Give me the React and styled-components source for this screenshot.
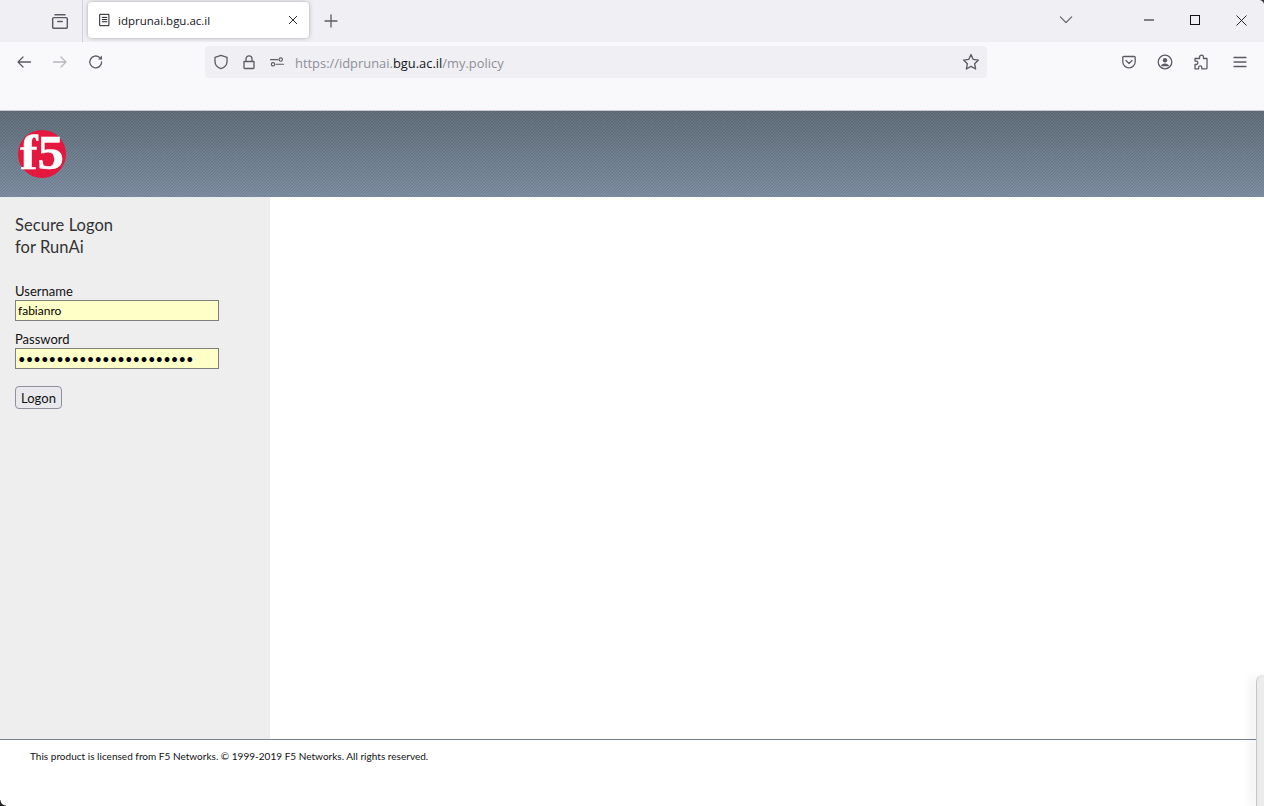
import styled, { createGlobalStyle } from "styled-components";

const GlobalStyle = createGlobalStyle`
  html, body {
    margin: 0;
    padding: 0;
    background: #fff;
  }
`;

const Icon = ({ size = 16, children, color = "#5b5b66", width = 1.3 }) => (
  <svg
    width={size}
    height={size}
    viewBox="0 0 16 16"
    fill="none"
    stroke={color}
    strokeWidth={width}
    strokeLinecap="round"
    strokeLinejoin="round"
  >
    {children}
  </svg>
);

const F5Logo = () => (
  <LogoSvg width="50" height="50" viewBox="0 0 50 50">
    <circle cx="25" cy="25" r="24" fill="#e4173e" />
    <text
      x="3"
      y="40"
      fontFamily="'Liberation Serif', serif"
      fontWeight="700"
      fontSize="48"
      fill="#fff"
      stroke="#fff"
      strokeWidth="0.5"
      textLength="44"
      lengthAdjust="spacingAndGlyphs"
    >
      f5
    </text>
  </LogoSvg>
);

const App = () => {
  return (
    <>
      <GlobalStyle />
      <Page>
        <TabStrip>
          <TabsButton>
            <Icon size={18}>
              <path d="M3.500 2.500h9M2.500 5h11a1 1 0 0 1 1 1v7.500a1 1 0 0 1-1 1h-11a1 1 0 0 1-1-1V6a1 1 0 0 1 1-1zM6 8.500h4" />
            </Icon>
          </TabsButton>
          <Tab>
            <Icon size={14} color="#15141a" width={1.1}>
              <path d="M2.500 1.500h10v13h-10zM5 5h5M5 7.500h5M5 10h5" strokeLinecap="square" />
            </Icon>
            <TabTitle>idprunai.bgu.ac.il</TabTitle>
            <Icon size={12} color="#15141a" width={1.2}>
              <path d="M3 3l10 10M13 3L3 13" />
            </Icon>
          </Tab>
          <NewTab>
            <Icon size={16} width={1.3}>
              <path d="M8 2v12M2 8h12" />
            </Icon>
          </NewTab>
          <Spacer />
          <TabListArrow>
            <Icon size={14}>
              <path d="M1.500 4.500L8 11l6.500-6.500" />
            </Icon>
          </TabListArrow>
          <WindowButton>
            <svg width="10" height="10" viewBox="0 0 10 10">
              <path d="M0 5h10" stroke="#111" strokeWidth="1" />
            </svg>
          </WindowButton>
          <WindowButton>
            <svg width="10" height="10" viewBox="0 0 10 10">
              <rect x="0.5" y="0.5" width="9" height="9" fill="none" stroke="#111" />
            </svg>
          </WindowButton>
          <WindowButton>
            <svg width="11" height="11" viewBox="0 0 11 11">
              <path d="M0.5 0.5l10 10M10.5 0.5l-10 10" stroke="#111" strokeWidth="0.9" />
            </svg>
          </WindowButton>
        </TabStrip>

        <NavBar>
          <NavButtons>
            <NavIcon>
              <Icon size={16}>
                <path d="M14.500 8H2M7 3L2 8l5 5" />
              </Icon>
            </NavIcon>
            <NavIcon>
              <Icon size={16} color="#b8b8bd">
                <path d="M1.500 8H14M9 3l5 5-5 5" />
              </Icon>
            </NavIcon>
            <NavIcon>
              <Icon size={16}>
                <path d="M13.600 8a5.900 5.900 0 1 1-1.900-4.400" />
                <path d="M14 1.500v4h-4z" fill="#5b5b66" stroke="none" />
              </Icon>
            </NavIcon>
          </NavButtons>
          <UrlBar>
            <UrlIcons>
              <Icon size={16}>
                <path d="M8 1.300l6 2v4.200c0 3.600-2.600 6-6 7.200-3.400-1.200-6-3.600-6-7.200V3.300z" />
              </Icon>
              <Icon size={16}>
                <path d="M3 7.500h10v6.200a.8.8 0 0 1-.8.8H3.800a.8.8 0 0 1-.8-.8zM5 7.500V4.800a3 3 0 0 1 6 0v2.700" />
              </Icon>
              <Icon size={16} width={1.1}>
                <circle cx="11.700" cy="5.600" r="1.700" />
                <circle cx="4" cy="10.300" r="1.700" />
                <path d="M1.500 5.600h7.500M7 10.300h7.500" />
              </Icon>
            </UrlIcons>
            <UrlText>
              https://idprunai.<strong>bgu.ac.il</strong>/my.policy
            </UrlText>
            <Icon size={18} width={1.2}>
              <path d="M8 1.400l2 4.300 4.600.6-3.400 3.200.9 4.700L8 11.900l-4.100 2.300.9-4.700-3.400-3.200 4.600-.6z" />
            </Icon>
          </UrlBar>
          <Spacer />
          <Tools>
            <ToolIcon>
              <Icon size={16}>
                <path d="M2.800 2.500h10.400a1 1 0 0 1 1 1v4.200a6.200 6.200 0 0 1-12.400 0V3.500a1 1 0 0 1 1-1zM5 6.500l3 3 3-3" />
              </Icon>
            </ToolIcon>
            <ToolIcon>
              <Icon size={16}>
                <circle cx="8" cy="8" r="6.800" />
                <circle cx="8" cy="6.300" r="2.200" fill="#5b5b66" stroke="none" />
                <path d="M3.800 12.300c.6-2 2.300-2.800 4.200-2.800s3.600.8 4.200 2.800" fill="#5b5b66" stroke="none" />
              </Icon>
            </ToolIcon>
            <ToolIcon>
              <Icon size={16}>
                <path d="M6.500 3.200a2 2 0 0 1 4 0V4.500h3.500v9.500a.8.8 0 0 1-.8.8H8.800v-1.300a1.600 1.600 0 0 0-3.200 0v1.300H2V10.500h1.200a1.700 1.700 0 0 0 0-3.400H2V4.500h4.500z" />
              </Icon>
            </ToolIcon>
            <MenuIcon>
              <Icon size={16}>
                <path d="M2 3.500h12M2 8h12M2 12.500h12" />
              </Icon>
            </MenuIcon>
          </Tools>
        </NavBar>

        <Banner>
          <F5Logo />
        </Banner>

        <Main>
          <Sidebar>
            <Heading>
              Secure Logon
              <br />
              for RunAi
            </Heading>
            <Field>
              <FieldLabel htmlFor="username">Username</FieldLabel>
              <TextInput id="username" type="text" defaultValue="fabianro" />
            </Field>
            <Field>
              <FieldLabel htmlFor="password">Password</FieldLabel>
              <PasswordInput id="password" type="password" defaultValue="abcdefghijklmnopqrstuvw" />
            </Field>
            <LogonButton type="button">Logon</LogonButton>
          </Sidebar>
          <Content />
        </Main>

        <Footer>
          This product is licensed from F5 Networks. © 1999-2019 F5 Networks. All rights reserved.
        </Footer>

        <SidePanel />
        <CornerBottomLeft />
        <CornerTopRight />
      </Page>
    </>
  );
};

const Page = styled.div`
  position: relative;
  display: flex;
  flex-direction: column;
  width: 1264px;
  height: 806px;
  overflow: hidden;
  font-family: "Open Sans", "Noto Sans", sans-serif;
`;

const TabStrip = styled.div`
  display: flex;
  align-items: flex-start;
  height: 42px;
  background: #f0f0f4;
`;

const TabsButton = styled.div`
  display: flex;
  align-items: center;
  justify-content: center;
  width: 83px;
  height: 42px;
  box-sizing: border-box;
  padding-left: 37px;
  border-right: 1px solid #cfcfd8;
`;

const Tab = styled.div`
  display: flex;
  align-items: center;
  box-sizing: border-box;
  width: 221px;
  height: 36px;
  margin: 2px 0 0 5px;
  padding: 0 10px;
  background: #fff;
  border-radius: 4px;
  box-shadow: 0 0 4px rgba(0, 0, 0, 0.3);
`;

const TabTitle = styled.span`
  flex: 1;
  margin-left: 6px;
  font-size: 11.5px;
  color: #15141a;
`;

const NewTab = styled.div`
  display: flex;
  align-items: center;
  justify-content: center;
  width: 44px;
  height: 42px;
`;

const Spacer = styled.div`
  flex: 1;
`;

const TabListArrow = styled.div`
  display: flex;
  align-items: center;
  justify-content: center;
  width: 44px;
  height: 40px;
  margin-right: 38px;
`;

const WindowButton = styled.div`
  display: flex;
  align-items: center;
  justify-content: center;
  width: 46px;
  height: 40px;
`;

const NavBar = styled.div`
  display: flex;
  align-items: flex-start;
  box-sizing: border-box;
  height: 69px;
  padding-top: 4px;
  background: #f9f9fb;
  border-bottom: 1px solid #c8c8cc;
`;

const NavButtons = styled.div`
  display: flex;
  gap: 4px;
  width: 205px;
  padding-left: 8px;
  box-sizing: border-box;
`;

const NavIcon = styled.div`
  display: flex;
  align-items: center;
  justify-content: center;
  width: 32px;
  height: 32px;
`;

const UrlBar = styled.div`
  display: flex;
  align-items: center;
  box-sizing: border-box;
  width: 782px;
  height: 32px;
  padding: 0 7px 0 8px;
  background: #f0f0f4;
  border-radius: 4px;
`;

const UrlIcons = styled.div`
  display: flex;
  gap: 12px;
  margin-right: 10px;
`;

const UrlText = styled.div`
  flex: 1;
  padding-top: 2px;
  font-size: 12.9px;
  color: #8f8f96;

  strong {
    font-weight: 400;
    color: #15141a;
  }
`;

const Tools = styled.div`
  display: flex;
  gap: 4px;
  padding-right: 8px;
`;

const ToolIcon = styled.div`
  display: flex;
  align-items: center;
  justify-content: center;
  width: 32px;
  height: 32px;
`;

const MenuIcon = styled(ToolIcon)`
  margin-left: 3px;
`;

const Banner = styled.div`
  display: flex;
  align-items: center;
  box-sizing: border-box;
  height: 86px;
  padding-left: 17px;
  background:
    repeating-linear-gradient(
      135deg,
      rgba(255, 255, 255, 0.05) 0,
      rgba(255, 255, 255, 0.05) 1.0607px,
      rgba(0, 0, 0, 0.06) 1.0607px,
      rgba(0, 0, 0, 0.06) 2.1213px
    ),
    linear-gradient(#5b6975, #78899d);
`;

const LogoSvg = styled.svg`
  overflow: visible;
`;

const Main = styled.div`
  display: flex;
  height: 542px;
`;

const Sidebar = styled.div`
  box-sizing: border-box;
  width: 270px;
  padding: 17px 15px 0;
  background: #eeeeee;
`;

const Content = styled.div`
  flex: 1;
  background: #fff;
`;

const Heading = styled.div`
  margin-bottom: 25px;
  font-family: "Lato", sans-serif;
  font-size: 16.5px;
  letter-spacing: 0.05px;
  line-height: 22px;
  color: #333;
`;

const Field = styled.div`
  margin-bottom: 10px;
`;

const FieldLabel = styled.label`
  display: block;
  font-family: "Lato", sans-serif;
  font-size: 13px;
  line-height: 17px;
  color: #111;
`;

const TextInput = styled.input`
  display: block;
  box-sizing: border-box;
  width: 204px;
  height: 21px;
  padding: 0 2px;
  font-family: "Lato", sans-serif;
  font-size: 12px;
  color: #000;
  background: #ffffc8;
  border: 1px solid #808080;
  border-radius: 0;
  outline: none;
`;

const PasswordInput = styled(TextInput)`
  font-size: 13px;
  letter-spacing: 0.1px;
`;

const LogonButton = styled.button`
  display: block;
  box-sizing: border-box;
  width: 47px;
  height: 23px;
  margin-top: 17px;
  padding: 0;
  font-family: "Lato", sans-serif;
  font-size: 13px;
  color: #111;
  background: #e9e9ed;
  border: 1px solid #8f8f9d;
  border-radius: 4px;
`;

const Footer = styled.div`
  flex: 1;
  padding: 10px 0 0 30px;
  font-family: "Lato", sans-serif;
  font-size: 10px;
  letter-spacing: 0.02px;
  color: #111;
  background: #fff;
  border-top: 1px solid #75818f;
`;

const SidePanel = styled.div`
  position: absolute;
  top: 675px;
  right: 0;
  bottom: 0;
  width: 7px;
  background: #ececec;
  border-left: 1px solid #c4c4c4;
  border-top-left-radius: 7px;
  box-shadow: -6px 0 10px rgba(0, 0, 0, 0.06);
`;

const CornerBottomLeft = styled.div`
  position: absolute;
  left: 0;
  bottom: 0;
  width: 6px;
  height: 6px;
  background: radial-gradient(circle at 100% 0, transparent 5px, #222 6px);
`;

const CornerTopRight = styled.div`
  position: absolute;
  top: 0;
  right: 0;
  width: 5px;
  height: 5px;
  background: radial-gradient(circle at 0 100%, transparent 4.5px, #333 5.5px);
`;

export default App;
